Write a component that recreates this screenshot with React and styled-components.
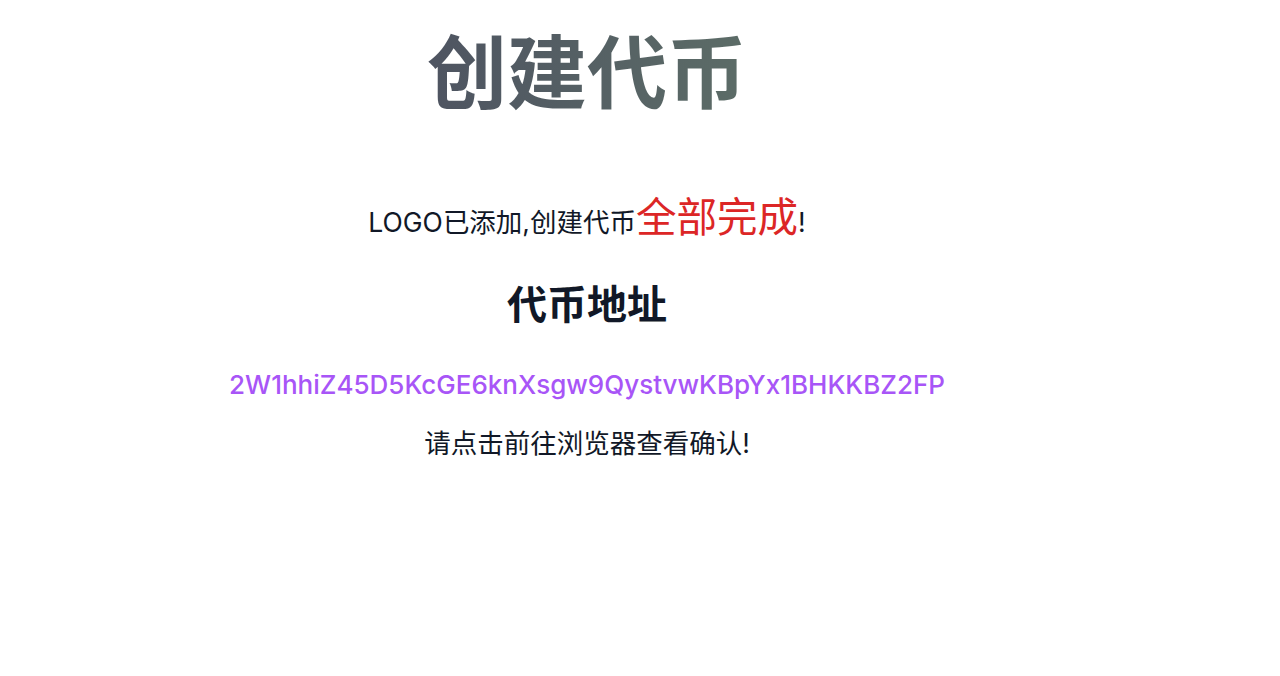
import React from 'react';
import styled, { createGlobalStyle } from 'styled-components';

const GlobalStyle = createGlobalStyle`
    html, body {
        margin: 0;
        padding: 0;
        background: #ffffff;
    }

    body {
        font-family: Inter, "Noto Sans CJK SC", sans-serif;
        color: #111827;
    }
`

const Page = styled.div`
    width: 1174px;
    height: 676px;

    display: flex;
    flex-direction: column;
    align-items: center;
`

const Title = styled.h1`
    margin: 17px 0 0 0;

    font-family: "Noto Sans CJK SC", sans-serif;
    font-size: 80px;
    font-weight: 700;
    line-height: 100px;

    background: linear-gradient(90deg, #4e5461 0%, #5c6c67 100%);
    -webkit-background-clip: text;
    background-clip: text;
    color: transparent;
`

const Status = styled.div`
    margin: 77px 0 0 0;

    display: flex;
    flex-direction: row;
    align-items: baseline;

    font-size: 26.5px;
    line-height: 48px;
    color: #111827;
`

const Done = styled.span`
    font-size: 40.5px;
    color: #dc2626;
`

const Heading = styled.h2`
    margin: 33px 0 0 0;

    font-family: "Noto Sans CJK SC", sans-serif;
    font-size: 40px;
    font-weight: 700;
    line-height: 46px;
    color: #111827;
`

const Address = styled.div`
    margin: 44px 0 0 0;

    font-size: 26px;
    font-weight: 500;
    line-height: 32px;
    color: #a855f7;
`

const Hint = styled.div`
    margin: 25px 0 0 0;

    font-size: 26.5px;
    line-height: 34px;
    color: #111827;
`

export default function App() {
    const address = '2W1hhiZ45D5KcGE6knXsgw9QystvwKBpYx1BHKKBZ2FP';

    return (
        <Page>
            <GlobalStyle />
            <Title>创建代币</Title>
            <Status>
                LOGO已添加,创建代币<Done>全部完成</Done>!
            </Status>
            <Heading>代币地址</Heading>
            <Address>{address}</Address>
            <Hint>请点击前往浏览器查看确认!</Hint>
        </Page>
    );
}
